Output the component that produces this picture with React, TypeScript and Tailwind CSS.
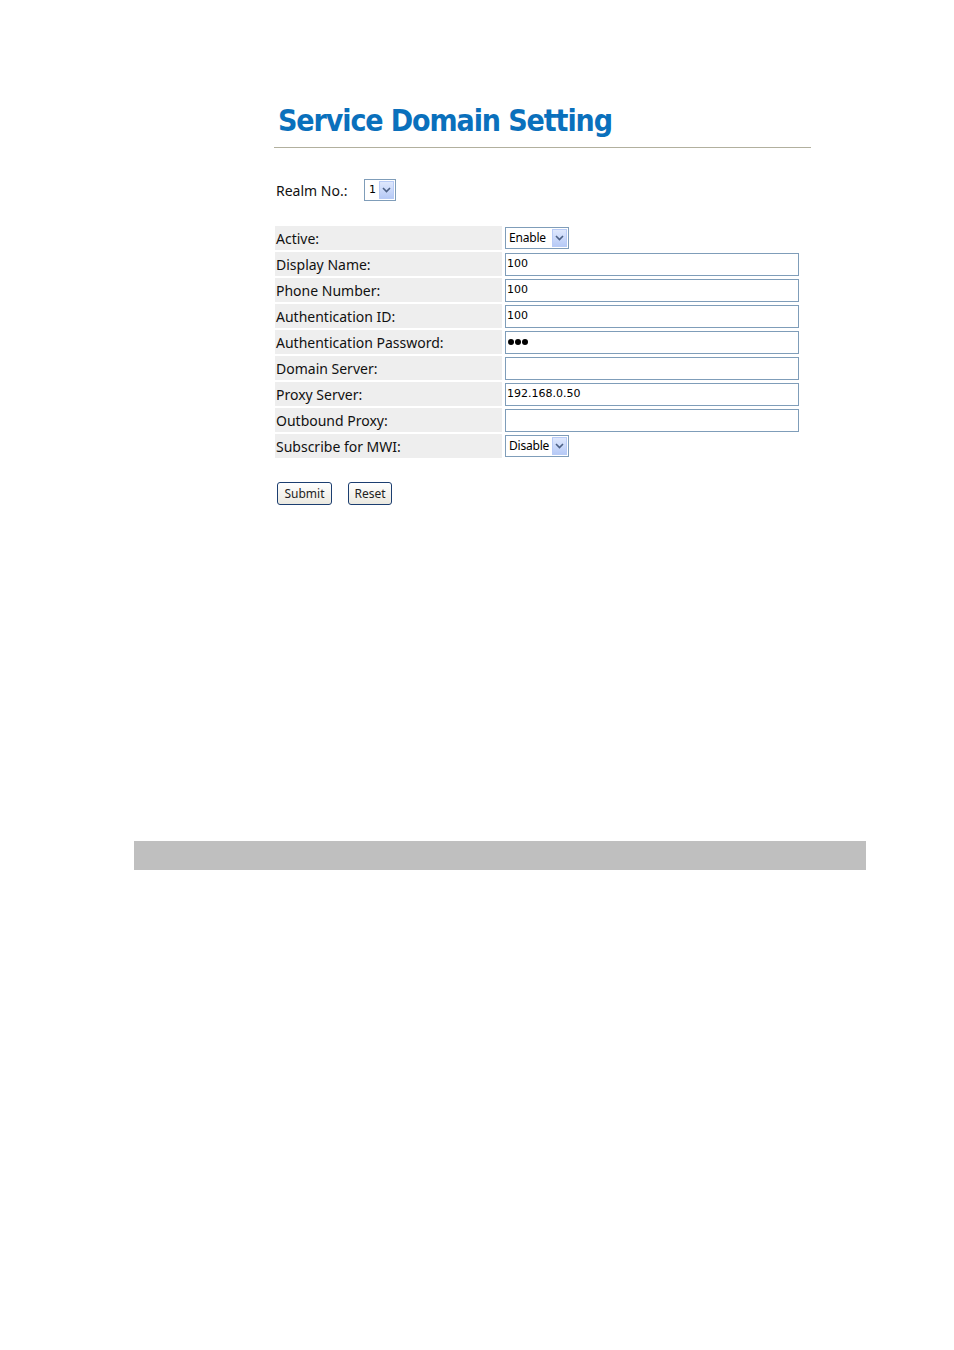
import React from "react";

const labelFont = { fontFamily: '"Noto Sans", "DejaVu Sans", sans-serif' };

function Arrow() {
  return (
    <span className="flex h-full w-[15px] items-center justify-center border border-[#b8cbf6] bg-gradient-to-b from-[#dfe8fd] to-[#b7caf6]">
      <svg width="9" height="6" viewBox="0 0 9 6">
        <path d="M1 1 L4.5 4.5 L8 1" fill="none" stroke="#4d6185" strokeWidth="1.6" />
      </svg>
    </span>
  );
}

function Select({ value }: { value: string }) {
  return (
    <div className="flex h-[22px] w-[64px] items-stretch border border-[#7f9db9] bg-white p-px">
      <span className="flex flex-1 items-center pl-[2px] text-[12px] tracking-[-0.2px] text-black" style={labelFont}>
        {value}
      </span>
      <Arrow />
    </div>
  );
}

function TextBox({ value }: { value: string }) {
  return (
    <div className="flex h-[23px] w-[294px] items-center border border-[#7f9db9] bg-white pl-[1px] text-[11px] text-black" style={{ fontFamily: '"DejaVu Sans", sans-serif' }}>
      {value}
    </div>
  );
}

const rows: { label: string; kind: "select" | "text" | "pw"; value: string }[] = [
  { label: "Active:", kind: "select", value: "Enable" },
  { label: "Display Name:", kind: "text", value: "100" },
  { label: "Phone Number:", kind: "text", value: "100" },
  { label: "Authentication ID:", kind: "text", value: "100" },
  { label: "Authentication Password:", kind: "pw", value: "" },
  { label: "Domain Server:", kind: "text", value: "" },
  { label: "Proxy Server:", kind: "text", value: "192.168.0.50" },
  { label: "Outbound Proxy:", kind: "text", value: "" },
  { label: "Subscribe for MWI:", kind: "select", value: "Disable" },
];

export default function App() {
  return (
    <div className="flex h-[1350px] w-[954px] flex-col bg-white">
      <div className="h-[841px] pl-[274px] pt-[103px]">
        <div className="w-[537px] border-b border-[#b2b09e] pb-[8px]">
          <h1
            className="ml-[4px] text-[30px] font-bold leading-[36px] text-[#0a70bc]"
            style={{ fontFamily: '"DejaVu Sans", sans-serif', fontStretch: "condensed", letterSpacing: "-1.1px" }}
          >
            Service Domain Setting
          </h1>
        </div>

        <div className="mt-[31px] flex items-center pl-[2px]" style={labelFont}>
          <span className="w-[88px] text-[14px] text-[#111]">Realm No.:</span>
          <div className="flex h-[22px] w-[32px] items-stretch border border-[#7f9db9] bg-white p-px">
            <span className="flex flex-1 items-center pl-[3px] text-[11px]" style={{ fontFamily: '"DejaVu Sans", sans-serif' }}>1</span>
            <Arrow />
          </div>
        </div>

        <div className="mt-[25px] flex flex-col gap-[2px] pl-[1px]">
          {rows.map((r) => (
            <div key={r.label} className="flex h-[24px] gap-[2px]">
              <div className="flex w-[227px] items-center bg-[#eeeeee] pl-[1px] text-[14px] text-[#111]" style={labelFont}>
                {r.label}
              </div>
              <div className="flex items-center pl-[1px]">
                {r.kind === "select" ? (
                  <Select value={r.value} />
                ) : r.kind === "pw" ? (
                  <div className="flex h-[23px] w-[294px] items-center border border-[#7f9db9] bg-white pl-[2px]">
                    <span className="flex gap-[1px]">
                      <span className="h-[6px] w-[6px] rounded-full bg-black" />
                      <span className="h-[6px] w-[6px] rounded-full bg-black" />
                      <span className="h-[6px] w-[6px] rounded-full bg-black" />
                    </span>
                  </div>
                ) : (
                  <TextBox value={r.value} />
                )}
              </div>
            </div>
          ))}
        </div>

        <div className="mt-[24px] flex gap-[16px] pl-[3px]">
          <button
            className="h-[23px] w-[55px] rounded-[3px] border border-[#1c3e70] bg-gradient-to-b from-white to-[#ebe9e0] text-[12px] text-[#222]"
            style={labelFont}
          >
            Submit
          </button>
          <button
            className="h-[23px] w-[44px] rounded-[3px] border border-[#1c3e70] bg-gradient-to-b from-white to-[#ebe9e0] text-[12px] text-[#222]"
            style={labelFont}
          >
            Reset
          </button>
        </div>
      </div>
      <div className="ml-[134px] h-[29px] w-[732px] bg-[#bfbfbf]" />
    </div>
  );
}
